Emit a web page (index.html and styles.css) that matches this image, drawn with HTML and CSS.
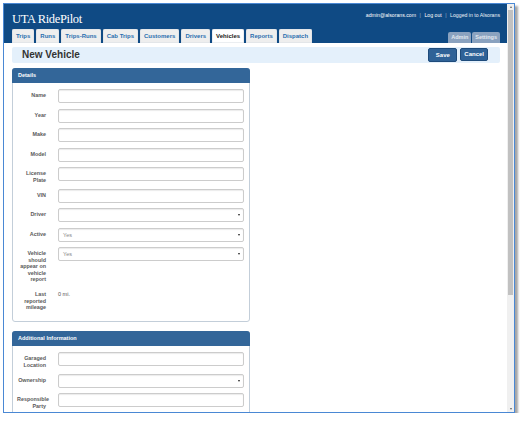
FILE: index.html
```html
<!DOCTYPE html>
<html lang="en">
<head>
<meta charset="utf-8">
<title>UTA RidePilot - New Vehicle</title>
<link rel="stylesheet" href="styles.css">
</head>
<body>
<div class="window">
  <div class="page">
    <header class="header">
      <div class="topbar">
        <div class="brand">UTA RidePilot</div>
        <div class="user-links">
          <a class="link">admin@alsorans.com</a><span class="sep">|</span><a class="link">Log out</a><span class="sep">|</span><span>Logged in to Alsorans</span>
        </div>
      </div>
      <nav class="tabs">
        <ul class="tab-list">
          <li class="tab">Trips</li>
          <li class="tab">Runs</li>
          <li class="tab">Trips-Runs</li>
          <li class="tab">Cab Trips</li>
          <li class="tab">Customers</li>
          <li class="tab">Drivers</li>
          <li class="tab active">Vehicles</li>
          <li class="tab">Reports</li>
          <li class="tab">Dispatch</li>
        </ul>
        <ul class="tab-list admin-list">
          <li class="admin-tab">Admin</li>
          <li class="admin-tab">Settings</li>
        </ul>
      </nav>
    </header>

    <main class="content">
      <div class="title-bar">
        <h1 class="page-title">New Vehicle</h1>
        <div class="actions">
          <button class="btn btn-save">Save</button>
          <button class="btn btn-cancel">Cancel</button>
        </div>
      </div>

      <section class="panel">
        <div class="panel-heading">Details</div>
        <div class="panel-body">
          <div class="field"><label class="label">Name</label><input class="input" type="text"></div>
          <div class="field"><label class="label">Year</label><input class="input" type="text"></div>
          <div class="field"><label class="label">Make</label><input class="input" type="text"></div>
          <div class="field"><label class="label">Model</label><input class="input" type="text"></div>
          <div class="field"><label class="label">License Plate</label><input class="input" type="text"></div>
          <div class="field"><label class="label">VIN</label><input class="input" type="text"></div>
          <div class="field"><label class="label">Driver</label><div class="select"><span class="select-value"></span><span class="caret"></span></div></div>
          <div class="field"><label class="label">Active</label><div class="select"><span class="select-value">Yes</span><span class="caret"></span></div></div>
          <div class="field"><label class="label">Vehicle should appear on vehicle report</label><div class="select"><span class="select-value">Yes</span><span class="caret"></span></div></div>
          <div class="field"><label class="label">Last reported mileage</label><div class="static">0 mi.</div></div>
        </div>
      </section>

      <section class="panel panel-second">
        <div class="panel-heading">Additional Information</div>
        <div class="panel-body">
          <div class="field"><label class="label">Garaged Location</label><input class="input" type="text"></div>
          <div class="field"><label class="label">Ownership</label><div class="select"><span class="select-value"></span><span class="caret"></span></div></div>
          <div class="field"><label class="label">Responsible Party</label><input class="input" type="text"></div>
        </div>
      </section>
    </main>
  </div>

  <div class="scrollbar">
    <span class="arrow-up"></span>
    <span class="thumb"></span>
    <span class="arrow-down"></span>
  </div>
</div>
</body>
</html>
```

FILE: styles.css
```css
html, body {
  margin: 0;
  padding: 0;
  background: #ffffff;
}

body {
  font-family: "Liberation Sans", Arial, sans-serif;
}

.window {
  margin: 3px 0 0 3px;
  width: 510px;
  height: 408px;
  border: 1px solid #4a88d4;
  box-shadow: 3px 3px 2px rgba(0, 0, 0, 0.35);
  display: flex;
  overflow: hidden;
  background: #ffffff;
}

.page {
  flex: 1;
  min-width: 0;
  overflow: hidden;
}

/* Header */
.header {
  background: #0f4a84;
  height: 39px;
  padding: 0 7px 0 8px;
  display: flex;
  flex-direction: column;
}

.topbar {
  height: 25px;
  display: flex;
  justify-content: space-between;
  align-items: flex-start;
}

.brand {
  font-family: "Liberation Serif", "Times New Roman", serif;
  font-size: 12.5px;
  letter-spacing: -0.35px;
  line-height: 14px;
  padding-top: 8px;
  color: #ffffff;
}

.user-links {
  margin-top: 8px;
  font-size: 5.2px;
  line-height: 7px;
  color: #eef3f8;
  display: flex;
}

.link {
  color: #ffffff;
}

.sep {
  margin: 0 3.5px;
  color: #9db4cc;
}

.tabs {
  height: 14px;
  display: flex;
  justify-content: space-between;
  align-items: flex-end;
}

.tab-list {
  list-style: none;
  margin: 0;
  padding: 0;
  display: flex;
  align-items: flex-end;
  gap: 2px;
}

.tab {
  height: 14px;
  line-height: 14px;
  padding: 0 4px;
  font-size: 6px;
  font-weight: bold;
  color: #2b6fae;
  background: #eeeeee;
  border-radius: 2px 2px 0 0;
  box-shadow: inset 0 0 0 0.5px #d8dde3;
}

.tab.active {
  background: #ffffff;
  color: #1a1a1a;
}

.admin-list {
  gap: 1px;
}

.admin-tab {
  height: 11px;
  line-height: 11px;
  padding: 0 3px;
  font-size: 5.5px;
  font-weight: bold;
  color: #e3e9f0;
  background: #8aa2bf;
  border-radius: 2px 2px 0 0;
}

/* Content */
.content {
  padding: 4px 7px 0 8px;
}

.title-bar {
  height: 16px;
  background: #e4f0fb;
  border-radius: 2px;
  display: flex;
  align-items: center;
  justify-content: space-between;
  padding: 0 12px 0 10px;
}

.page-title {
  margin: 0;
  font-size: 10px;
  font-weight: bold;
  color: #333333;
  line-height: 12px;
}

.actions {
  display: flex;
  gap: 3px;
}

.btn {
  height: 14px;
  margin: 0;
  font-family: "Liberation Sans", Arial, sans-serif;
  font-size: 6px;
  font-weight: bold;
  color: #ffffff;
  background: #2f6297;
  border: 1px solid #1e4b7b;
  border-radius: 2px;
  line-height: 12px;
}

.btn-save {
  padding: 0 6.5px;
}

.btn-cancel {
  padding: 0 3px;
  height: 13px;
  line-height: 11px;
}

.panel {
  width: 238px;
  box-sizing: border-box;
  margin-top: 5px;
  border: 1px solid #c3ced9;
  border-radius: 3px;
  background: #ffffff;
}

.panel-second {
  margin-top: 9px;
}

.panel-heading {
  margin: -1px -1px 0;
  height: 15px;
  line-height: 15px;
  padding-left: 6px;
  background: #336699;
  border-radius: 3px 3px 0 0;
  color: #ffffff;
  font-size: 5.5px;
  font-weight: bold;
}

.panel-body {
  padding: 6px 5px 5px 4px;
}

.field {
  display: grid;
  grid-template-columns: 29px 1fr;
  column-gap: 12px;
  align-items: start;
  margin-bottom: 5.5px;
}

.label {
  padding-top: 3px;
  font-size: 5.4px;
  line-height: 6.5px;
  font-weight: bold;
  color: #5a5a5a;
  text-align: right;
}

.input,
.select {
  display: block;
  width: 100%;
  height: 14px;
  box-sizing: border-box;
  margin: 0;
  border: 1px solid #cccccc;
  border-radius: 2px;
  box-shadow: inset 0 1px 1px rgba(0, 0, 0, 0.08);
  background: #ffffff;
}

.select {
  position: relative;
  padding-left: 4px;
  font-size: 5.5px;
  line-height: 12px;
  color: #888888;
}

.caret {
  position: absolute;
  right: 3px;
  top: 5px;
  width: 0;
  height: 0;
  border-left: 1.5px solid transparent;
  border-right: 1.5px solid transparent;
  border-top: 2px solid #222222;
}

.static {
  padding-top: 3px;
  font-size: 5.5px;
  line-height: 6.5px;
  color: #555555;
}

/* Scrollbar */
.scrollbar {
  width: 7px;
  background: #f0f0f0;
  display: flex;
  flex-direction: column;
  align-items: center;
}

.arrow-up {
  margin-top: 1.5px;
  width: 0;
  height: 0;
  border-left: 1.5px solid transparent;
  border-right: 1.5px solid transparent;
  border-bottom: 2px solid #606060;
}

.thumb {
  margin-top: 2px;
  width: 5px;
  height: 285px;
  background: #c1c1c1;
}

.arrow-down {
  margin-top: auto;
  margin-bottom: 2px;
  width: 0;
  height: 0;
  border-left: 1.5px solid transparent;
  border-right: 1.5px solid transparent;
  border-top: 2px solid #606060;
}
```
